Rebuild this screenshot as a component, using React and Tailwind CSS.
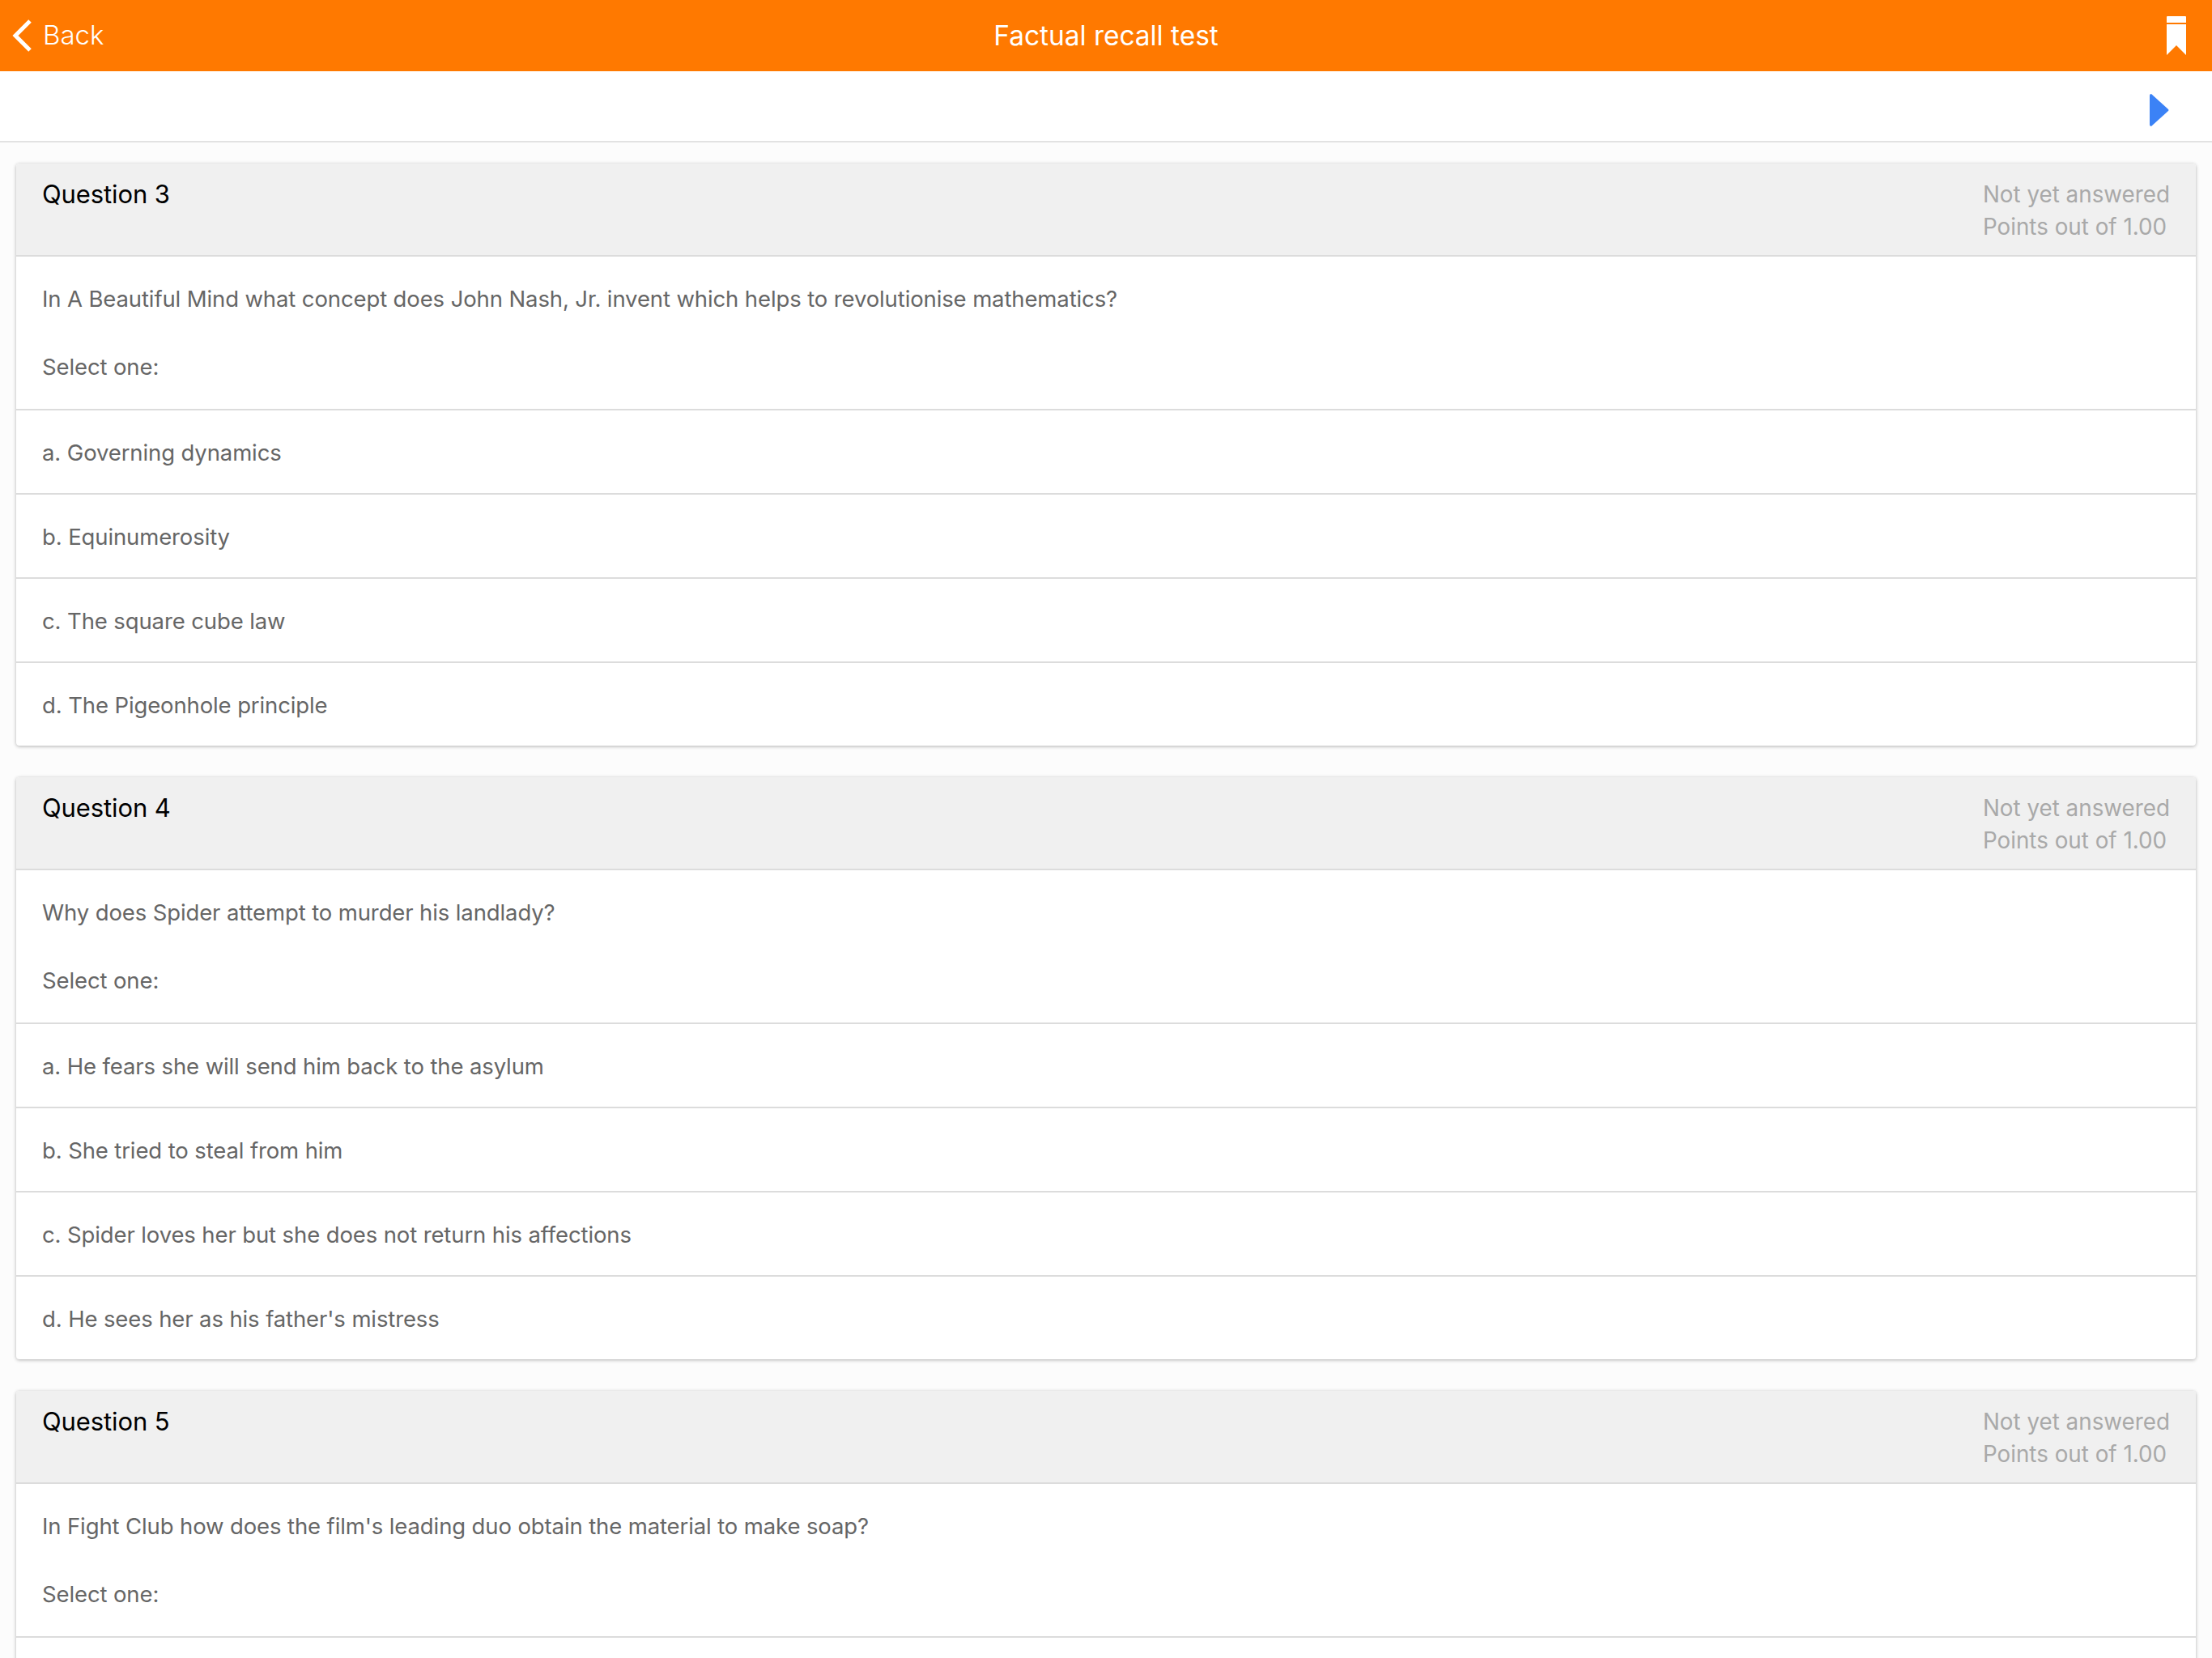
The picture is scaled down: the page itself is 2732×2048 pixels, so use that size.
const questions = [
  {
    title: "Question 3",
    text: "In A Beautiful Mind what concept does John Nash, Jr. invent which helps to revolutionise mathematics?",
    answers: ["a. Governing dynamics", "b. Equinumerosity", "c. The square cube law", "d. The Pigeonhole principle"],
  },
  {
    title: "Question 4",
    text: "Why does Spider attempt to murder his landlady?",
    answers: [
      "a. He fears she will send him back to the asylum",
      "b. She tried to steal from him",
      "c. Spider loves her but she does not return his affections",
      "d. He sees her as his father's mistress",
    ],
  },
  {
    // the next answers are cut off by the bottom of the screen
    title: "Question 5",
    text: "In Fight Club how does the film's leading duo obtain the material to make soap?",
    answers: [""],
  },
];

const Question = ({ q }) => (
  <div className="mb-[39px] rounded-[4px] bg-white shadow-[0_1px_4px_rgba(0,0,0,0.3)]">
    <div className="flex h-[115px] justify-between rounded-t-[4px] border-b-2 border-[#dcdcdc] bg-[#f0f0f0] px-[32px] pt-[18px]">
      <div className="text-[31px] leading-[40px] tracking-[-0.1px] text-black">{q.title}</div>
      <div className="text-[27.8px] leading-[40px] tracking-normal text-[#a9a9a9]">
        <div>Not yet answered</div>
        <div>Points out of 1.00</div>
      </div>
    </div>
    <div className="h-[188px] px-[32px] pt-[32px] text-[#666666]">
      <div className="h-[44px] leading-[40px]">{q.text}</div>
      <div className="mt-[40px] leading-[40px]">Select one:</div>
    </div>
    {q.answers.map((a) => (
      <div key={a} className="h-[104px] border-t-2 border-[#dcdcdc] px-[32px] pt-[32px] leading-[40px] text-[#666666]">
        {a}
      </div>
    ))}
  </div>
);

const App = () => {
  return (
    <div className="h-[2048px] w-[2732px] overflow-hidden bg-[#fcfcfc] font-['Inter',sans-serif] text-[27.5px] tracking-[-0.12px]">
      <div className="relative flex h-[88px] items-center justify-between bg-[#ff7900] pr-[32px] pl-[14px] tracking-normal text-white">
        <div className="flex items-center gap-[13px]">
          <svg width="26" height="42" viewBox="0 0 26 42">
            <path d="M23 3 L5 21 L23 39" fill="none" stroke="white" strokeWidth="5" />
          </svg>
          <span className="text-[33px] font-light">Back</span>
        </div>
        <div className="absolute inset-x-0 text-center text-[33.4px]">Factual recall test</div>
        <svg width="24" height="48" viewBox="0 0 24 48">
          <path d="M0 1 a1 1 0 0 1 1 -1 H23 a1 1 0 0 1 1 1 V8 H0 Z M0 10 H24 V48 L12 36 L0 48 Z" fill="white" />
        </svg>
      </div>
      <div className="flex h-[88px] items-start justify-end border-b-2 border-[#e2e2e2] bg-white pt-[28px] pr-[53px]">
        <svg width="24" height="40" viewBox="0 0 24 40">
          <path d="M0 2 Q0 0 2 0 L23 19 Q24 20 23 21 L2 40 Q0 40 0 38 Z" fill="#3b82f6" />
        </svg>
      </div>
      <div className="px-[20px] pt-[26px]">
        {questions.map((q) => (
          <Question key={q.title} q={q} />
        ))}
      </div>
    </div>
  );
};

export default App;
